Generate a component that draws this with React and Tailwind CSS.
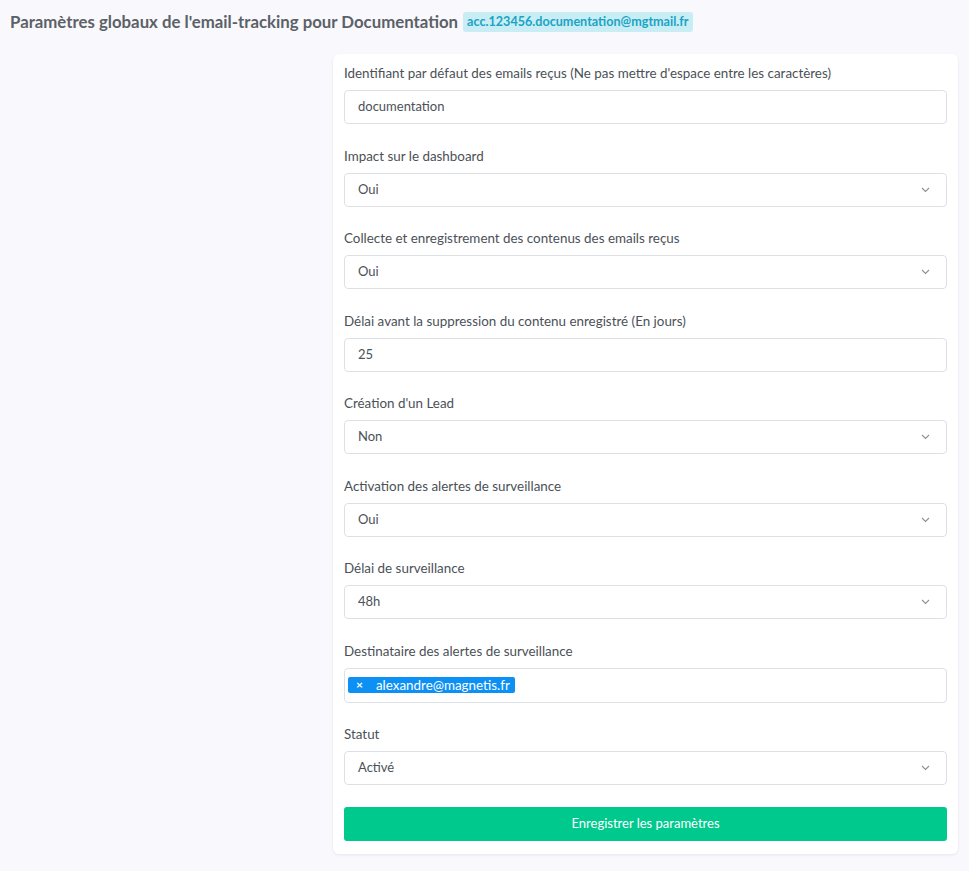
import { useState } from 'react'

const fieldsTop = [
  { label: "Identifiant par défaut des emails reçus (Ne pas mettre d'espace entre les caractères)", type: 'text', value: 'documentation' },
  { label: 'Impact sur le dashboard', type: 'select', value: 'Oui' },
  { label: 'Collecte et enregistrement des contenus des emails reçus', type: 'select', value: 'Oui' },
  { label: 'Délai avant la suppression du contenu enregistré (En jours)', type: 'text', value: '25' },
  { label: "Création d'un Lead", type: 'select', value: 'Non' },
  { label: 'Activation des alertes de surveillance', type: 'select', value: 'Oui' },
  { label: 'Délai de surveillance', type: 'select', value: '48h' },
]

const Chevron = () => (
  <svg width="9" height="6" viewBox="0 0 9 6" fill="none" className="shrink-0 mr-[2px]">
    <path d="M1 1l3.5 3.5L8 1" stroke="#8a9096" strokeWidth="1.1" />
  </svg>
)

const Field = ({ label, type, value }) => (
  <div className="flex flex-col">
    <label className="text-[13.4px] leading-4 text-[#4b5157] mb-[9px]">{label}</label>
    <div className="h-[34px] flex items-center justify-between pl-[13px] pr-[14px] border border-[#dde1e5] rounded-[4px] bg-white text-[13px] text-[#4b5157]">
      <span>{value}</span>
      {type === 'select' && <Chevron />}
    </div>
  </div>
)

export default function App() {
  const [recipients, setRecipients] = useState(['alexandre@magnetis.fr'])

  return (
    <div className="min-h-screen bg-[#f8f8fd] pl-[10px] pr-[11px] font-['Lato',_'Liberation_Sans',_sans-serif]">
      <div className="h-[54px] pt-[12px] flex items-start">
        <h1 className="text-[16.8px] leading-5 font-bold text-[#5b6166] mr-[5px]">
          Paramètres globaux de l'email-tracking pour Documentation
        </h1>
        <span className="h-5 px-[4px] flex items-center rounded-[3px] bg-[#c9edf5] text-[12.6px] font-bold text-[#19a4c4]">
          acc.123456.documentation@mgtmail.fr
        </span>
      </div>

      <div className="flex">
        <div className="w-[323px] shrink-0" />
        <div className="flex-1 bg-white rounded-[6px] shadow-[0_1px_3px_rgba(30,40,90,0.08)] p-[11px] pb-[13px] flex flex-col">
          <div className="flex flex-col gap-[23.5px]">
            {fieldsTop.map((f) => (
              <Field key={f.label} {...f} />
            ))}

            <div className="flex flex-col">
              <label className="text-[13.4px] leading-4 text-[#4b5157] mb-[9px]">
                Destinataire des alertes de surveillance
              </label>
              <div className="h-[35px] flex items-center gap-1 px-[3px] border border-[#dde1e5] rounded-[4px] bg-white">
                {recipients.map((r) => (
                  <span
                    key={r}
                    className="h-4 flex items-center pl-[8px] pr-[5px] rounded-[2px] bg-[#0c90f4] text-white text-[13.4px] leading-4"
                  >
                    <button
                      onClick={() => setRecipients(recipients.filter((x) => x !== r))}
                      className="text-[12px] font-bold mr-[13px] leading-none"
                    >
                      ×
                    </button>
                    {r}
                  </span>
                ))}
              </div>
            </div>

            <Field label="Statut" type="select" value="Activé" />
          </div>

          <button className="mt-[22px] h-[34px] w-full rounded-[3px] bg-[#00c98e] text-white text-[13px]">
            Enregistrer les paramètres
          </button>
        </div>
      </div>
      <div className="h-4" />
    </div>
  )
}
